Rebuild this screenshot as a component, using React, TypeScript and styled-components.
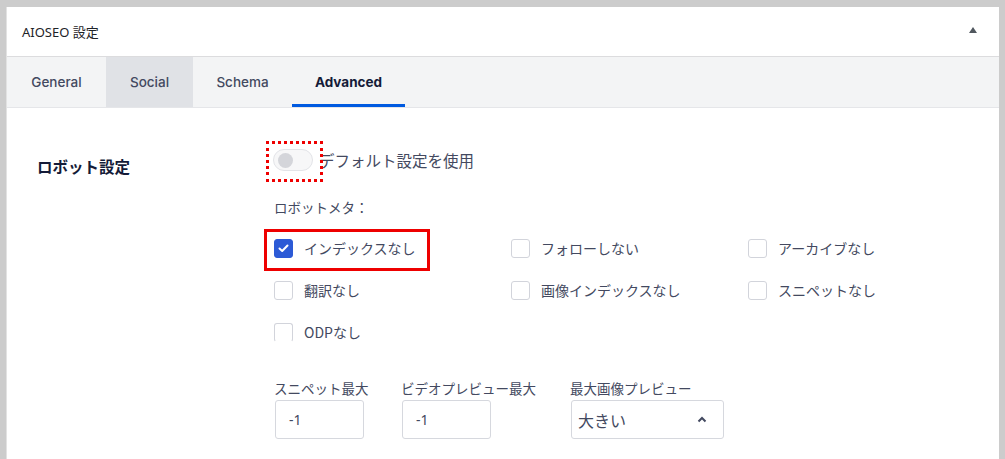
import React from "react";
import styled, { createGlobalStyle, css } from "styled-components";

const GlobalStyle = createGlobalStyle`
  html, body {
    margin: 0;
    padding: 0;
    background: #cccccc;
    overflow: hidden;
    font-family: "Noto Sans", "Noto Sans CJK JP", sans-serif;
  }
  * { box-sizing: border-box; }
`;

const Frame = styled.div`
  width: 1005px;
  height: 459px;
  padding: 7px 6px 0 6px;
  overflow: hidden;
`;

const Panel = styled.div`
  background: #ffffff;
  border-left: 1px solid #e2e2e2;
  height: 600px;
`;

const Header = styled.div`
  height: 50px;
  display: flex;
  align-items: center;
  justify-content: space-between;
  padding: 0 22px 0 15px;
  border-bottom: 1px solid #dcdcde;
`;

const Title = styled.h2`
  margin: 0;
  font-size: 13px;
  font-weight: 400;
  color: #1d2327;
  font-family: "Noto Sans", "Noto Sans CJK JP", sans-serif;
`;

const Caret = styled.span`
  width: 0;
  height: 0;
  border-left: 4px solid transparent;
  border-right: 4px solid transparent;
  border-bottom: 6px solid #50575e;
  margin-top: -4px;
`;

const TabBar = styled.div`
  display: flex;
  height: 51px;
  background: #f3f4f5;
  border-bottom: 1px solid #e5e6e9;
`;

const Tab = styled.div<{ $width: number; $active?: boolean; $hover?: boolean }>`
  width: ${(p) => p.$width}px;
  display: flex;
  align-items: center;
  justify-content: center;
  font-family: Inter, "Noto Sans", sans-serif;
  font-size: 13.5px;
  font-weight: ${(p) => (p.$active ? 700 : 500)};
  color: ${(p) => (p.$active ? "#141b38" : "#434960")};
  background: ${(p) => (p.$hover ? "#e0e2e6" : "transparent")};
  border-bottom: 3px solid ${(p) => (p.$active ? "#005ae0" : "transparent")};
  padding-top: 3px;
`;

const Content = styled.div`
  display: grid;
  grid-template-columns: 237px 1fr;
  padding: 40px 0 0 30px;
`;

const SectionLabel = styled.div`
  font-size: 15.5px;
  font-weight: 700;
  color: #141b38;
  padding-top: 7px;
  font-family: "Noto Sans CJK JP", sans-serif;
`;

const Settings = styled.div`
  display: flex;
  flex-direction: column;
`;

const ToggleRow = styled.div`
  display: flex;
  align-items: center;
  height: 24px;
  gap: 6px;
  margin-left: -1px;
`;

const ToggleWrap = styled.div`
  position: relative;
  width: 40px;
  height: 22px;
  flex-shrink: 0;
  &::after {
    content: "";
    position: absolute;
    left: -7px;
    top: -8px;
    width: 51px;
    height: 35px;
    border: 3px dotted #ee0000;
  }
`;

const Track = styled.div`
  width: 40px;
  height: 22px;
  border-radius: 11px;
  border: 1px solid #e3e4e8;
  background: #f7f7f8;
  display: flex;
  align-items: center;
  padding-left: 4px;
`;

const Knob = styled.div`
  width: 15px;
  height: 15px;
  border-radius: 50%;
  background: #d4d5da;
`;

const ToggleText = styled.span`
  font-size: 15.5px;
  color: #434960;
  font-family: "Noto Sans CJK JP", sans-serif;
`;

const MetaLabel = styled.div`
  font-size: 13.5px;
  color: #434960;
  margin-top: 23px;
  height: 24px;
  display: flex;
  align-items: center;
  font-family: "Noto Sans CJK JP", sans-serif;
`;

const CheckGrid = styled.div`
  display: grid;
  grid-template-columns: repeat(3, 237px);
  grid-auto-rows: 42px;
  margin-top: 8px;
`;

const CheckItem = styled.label<{ $highlight?: boolean }>`
  position: relative;
  display: flex;
  align-items: center;
  gap: 11px;
  height: 42px;
  align-self: start;
  ${(p) =>
    p.$highlight &&
    css`
      &::after {
        content: "";
        position: absolute;
        left: -10px;
        top: 2px;
        width: 160px;
        height: 36px;
        border: 3px solid #ee0000;
      }
    `}
`;

const Box = styled.span<{ $checked?: boolean; $clipped?: boolean }>`
  width: 19px;
  height: 19px;
  border-radius: 3px;
  border: 1px solid ${(p) => (p.$checked ? "#2c5ad6" : "#d2d4db")};
  border-bottom-color: ${(p) =>
    p.$clipped ? "transparent" : p.$checked ? "#2c5ad6" : "#d2d4db"};
  background: ${(p) => (p.$checked ? "#2c5ad6" : "#fff")};
  display: flex;
  align-items: center;
  justify-content: center;
  flex-shrink: 0;
`;

const CheckText = styled.span`
  font-size: 14px;
  color: #434960;
  font-family: "Noto Sans CJK JP", sans-serif;
`;

const Fields = styled.div`
  display: flex;
  margin-top: 25px;
  margin-left: 1px;
`;

const Field = styled.div<{ $width: number }>`
  width: ${(p) => p.$width}px;
  display: flex;
  flex-direction: column;
  gap: 2px;
`;

const FieldLabel = styled.span`
  font-size: 13.5px;
  color: #434960;
  margin-left: -1px;
  white-space: nowrap;
  font-family: "Noto Sans CJK JP", sans-serif;
`;

const NumInput = styled.div`
  width: 89px;
  height: 39px;
  border: 1px solid #d6d8de;
  border-radius: 3px;
  display: flex;
  align-items: center;
  padding-left: 13px;
  font-size: 14px;
  color: #434960;
  font-family: "Noto Sans", sans-serif;
`;

const Select = styled.div`
  width: 153px;
  height: 39px;
  border: 1px solid #d6d8de;
  border-radius: 3px;
  display: flex;
  align-items: center;
  justify-content: space-between;
  padding: 0 16px 0 6px;
  font-size: 16px;
  color: #434960;
  font-family: "Noto Sans CJK JP", sans-serif;
`;

const items = [
  { t: "インデックスなし", checked: true, hl: true },
  { t: "フォローしない" },
  { t: "アーカイブなし" },
  { t: "翻訳なし" },
  { t: "画像インデックスなし" },
  { t: "スニペットなし" },
  { t: "ODPなし", clipped: true },
];

export default function App() {
  return (
    <>
      <GlobalStyle />
      <Frame>
        <Panel>
          <Header>
            <Title>AIOSEO 設定</Title>
            <Caret />
          </Header>
          <TabBar>
            <Tab $width={99}>General</Tab>
            <Tab $width={87} $hover>
              Social
            </Tab>
            <Tab $width={99}>Schema</Tab>
            <Tab $width={113} $active>
              Advanced
            </Tab>
          </TabBar>
          <Content>
            <SectionLabel>ロボット設定</SectionLabel>
            <Settings>
              <ToggleRow>
                <ToggleWrap>
                  <Track>
                    <Knob />
                  </Track>
                </ToggleWrap>
                <ToggleText>デフォルト設定を使用</ToggleText>
              </ToggleRow>
              <MetaLabel>ロボットメタ：</MetaLabel>
              <CheckGrid>
                {items.map((it) => (
                  <CheckItem key={it.t} $highlight={it.hl}>
                    <Box $checked={it.checked} $clipped={it.clipped}>
                      {it.checked && (
                        <svg width="11" height="9" viewBox="0 0 11 9">
                          <path
                            d="M1.5 4.5 L4.2 7 L9.5 1.5"
                            fill="none"
                            stroke="#fff"
                            strokeWidth="2"
                            strokeLinecap="round"
                            strokeLinejoin="round"
                          />
                        </svg>
                      )}
                    </Box>
                    <CheckText>{it.t}</CheckText>
                  </CheckItem>
                ))}
              </CheckGrid>
              <Fields>
                <Field $width={127}>
                  <FieldLabel>スニペット最大</FieldLabel>
                  <NumInput>-1</NumInput>
                </Field>
                <Field $width={169}>
                  <FieldLabel>ビデオプレビュー最大</FieldLabel>
                  <NumInput>-1</NumInput>
                </Field>
                <Field $width={153}>
                  <FieldLabel>最大画像プレビュー</FieldLabel>
                  <Select>
                    <span>大きい</span>
                    <svg width="10" height="7" viewBox="0 0 10 7">
                      <path
                        d="M1.5 5.5 L5 2 L8.5 5.5"
                        fill="none"
                        stroke="#434960"
                        strokeWidth="2"
                      />
                    </svg>
                  </Select>
                </Field>
              </Fields>
            </Settings>
          </Content>
        </Panel>
      </Frame>
    </>
  );
}
